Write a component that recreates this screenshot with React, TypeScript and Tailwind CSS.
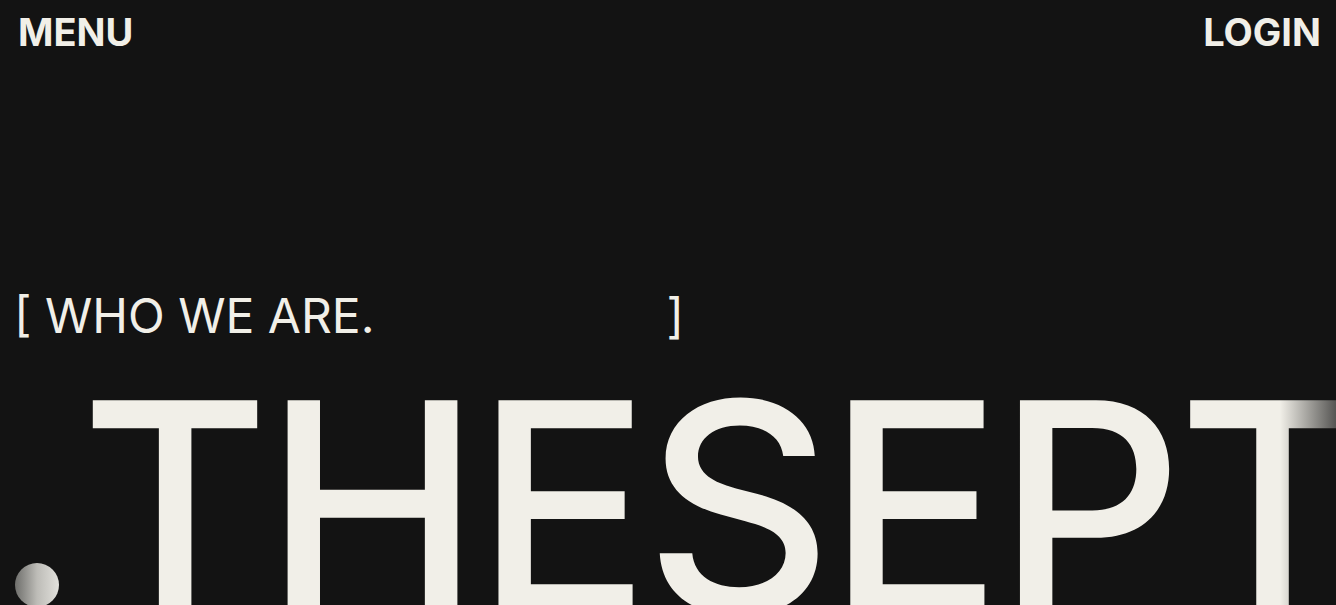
// Hero intro: header links, "who we are" label and the oversized wordmark

export default function App() {
  return (
    <div
      className="relative h-[605px] w-full overflow-hidden bg-[#131313] text-[#f1efe8]"
      style={{ fontFamily: 'Inter, "Noto Sans", sans-serif' }}
    >
      {/* Header */}
      <header className="flex items-center justify-between pl-[18px] pr-[15px] pt-[8px]">
        <a className="text-[38px] font-bold leading-[48px]">MENU</a>
        <a className="text-[38px] font-bold leading-[48px]">LOGIN</a>
      </header>

      {/* Section label */}
      <div className="mt-[236px] flex w-[684px] justify-between pl-[14px] text-[48px] font-normal leading-none">
        <span>[ WHO WE ARE.</span>
        <span>]</span>
      </div>

      {/* Wordmark */}
      <div className="mt-[21px] flex items-start pl-[15px]">
        <div className="mt-[202px] h-[44px] w-[44px] shrink-0 rounded-full bg-gradient-to-r from-[#6f6f6c] via-[#bdbcb7] to-[#e2e1dc]" />
        <h1 className="ml-[21px] whitespace-nowrap text-[291px] font-medium leading-none tracking-[-0.02em]">
          THESEPTEMBER
        </h1>
      </div>

      {/* Right edge fade */}
      <div className="pointer-events-none absolute bottom-0 right-0 top-[380px] w-[56px] bg-gradient-to-r from-transparent to-[#131313]/70" />
    </div>
  );
}
